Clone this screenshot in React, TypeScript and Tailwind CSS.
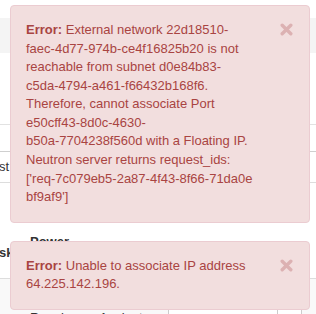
import React from 'react';

// no line break between a hyphen and a following digit, as in the original render
const keepIds = (s: string) => s.replace(/-(?=\d)/g, '-\u2060');

const CloseIcon: React.FC = () => (
  <svg width="13" height="13" viewBox="0 0 13 13" className="block">
    <path d="M2.2 2.2 L10.8 10.8 M10.8 2.2 L2.2 10.8" stroke="#dcb1b2" strokeWidth="3.4" strokeLinecap="round" />
  </svg>
);

const Alert: React.FC<{ text: string }> = ({ text }) => (
  <div className="relative rounded-[4px] border border-[#ebccd1] bg-[#f2dede] py-[15px] pl-[15px] pr-[56px] text-[#a94442] break-words">
    <button className="absolute right-[16px] top-[17px]">
      <CloseIcon />
    </button>
    <p>
      <strong>Error:</strong> {keepIds(text)}
    </p>
  </div>
);

const App: React.FC = () => {
  return (
    <div
      className="relative h-[314px] w-[316px] overflow-hidden bg-white text-[13px] leading-[1.42857] text-[#333]"
      style={{ fontFamily: '"Liberation Sans", Arial, sans-serif' }}
    >
      {/* page underneath the toasts */}
      <div className="h-[18px]" />
      <div className="h-[35px] bg-[#f4f4f4]" />
      <div className="h-[71px]" />
      <div className="h-[27px] border-t border-[#e2e2e2]" />
      <div className="flex h-[31px] items-center border-t border-[#cfcfcf]">
        <span className="-ml-[1px]">st</span>
      </div>
      <div className="h-[50px] border-t border-[#dddddd]" />
      <div className="relative h-[46px]">
        <span className="absolute left-[30px] top-[1px] font-bold">Power</span>
        <span className="absolute left-[-1px] top-[12px] font-bold">sk</span>
      </div>
      <div className="flex h-[40px] border-t border-[#dddddd] bg-[#f9f9f9] pt-[30px]">
        <span className="ml-[30px] w-[70px]">Running</span>
        <span className="w-[68px]">1 minute</span>
        <div className="-mt-[2px] flex h-[30px] rounded-[3px] border border-[#cccccc] bg-white">
          <span className="w-[109px] border-r border-[#cccccc] pl-[10px] pt-[2px]">Create Snapshot</span>
          <span className="w-[23px]" />
        </div>
      </div>

      {/* toasts */}
      <div className="absolute left-[10px] top-[5px] flex w-[300px] flex-col gap-[18px]">
        <Alert text="External network 22d18510-faec-4d77-974b-ce4f16825b20 is not reachable from subnet d0e84b83-c5da-4794-a461-f66432b168f6. Therefore, cannot associate Port e50cff43-8d0c-4630-b50a-7704238f560d with a Floating IP. Neutron server returns request_ids: ['req-7c079eb5-2a87-4f43-8f66-71da0ebf9af9']" />
        <Alert text="Unable to associate IP address 64.225.142.196." />
      </div>
    </div>
  );
};

export default App;
